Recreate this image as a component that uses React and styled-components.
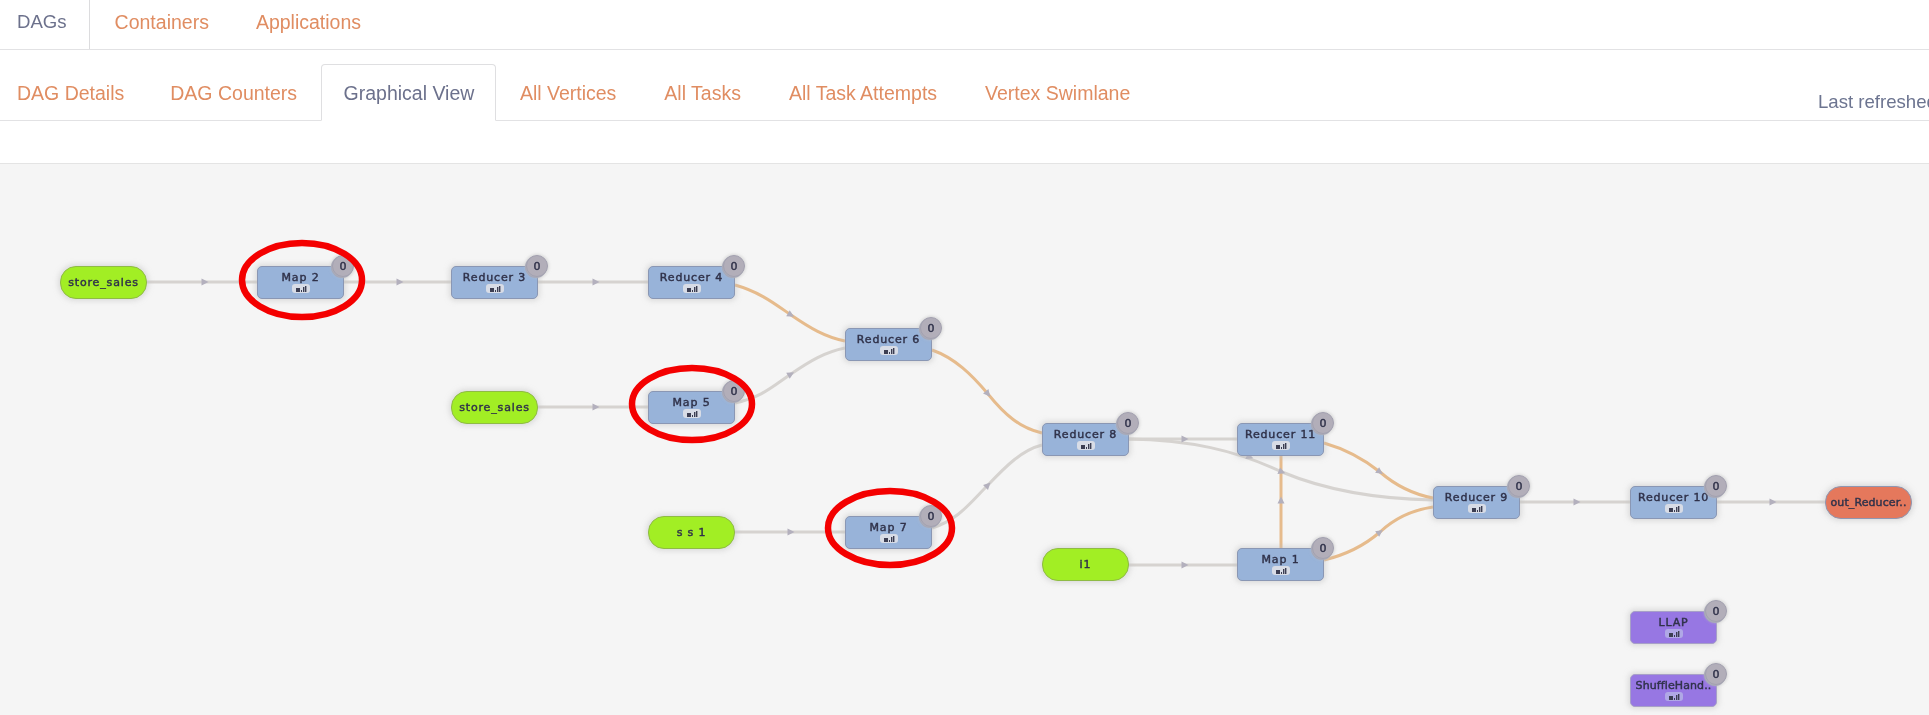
import React from 'react';
import styled, { createGlobalStyle } from 'styled-components';

const Global = createGlobalStyle`
  html, body { margin: 0; padding: 0; height: 100%; background: #fff; overflow: hidden; }
  #root { height: 100%; }
`;

const Page = styled.div`
  width: 1929px;
  height: 715px;
  display: flex;
  flex-direction: column;
  overflow: hidden;
  font-family: "Liberation Sans", Arial, sans-serif;
  filter: blur(0.4px);
`;

const MainNav = styled.nav`
  display: flex;
  height: 49px;
  flex: none;
  border-bottom: 1px solid #e2e2e4;
`;

const MainTab = styled.a`
  padding: 0 23.5px;
  line-height: 44px;
  font-size: 19.5px;
  color: ${p => (p.$active ? '#6c718c' : '#e08d62')};
  ${p => p.$active && `
    padding: 0 22px 0 17px;
    font-size: 18.6px;
    border-right: 1px solid #dcdcde;
    margin-right: 1.5px;
  `}
`;

const SubRow = styled.div`
  display: flex;
  align-items: flex-end;
  height: 56px;
  margin-top: 14px;
  flex: none;
  border-bottom: 1px solid #e2e2e4;
  position: relative;
`;

const SubNav = styled.nav`
  display: flex;
  height: 56px;
`;

const SubTab = styled.a`
  box-sizing: border-box;
  height: 57px;
  padding: 0 23px;
  line-height: 57px;
  font-size: 19.5px;
  border: 1px solid transparent;
  border-radius: 4px 4px 0 0;
  color: #e08d62;
  &:first-child { padding: 0 21px 0 16px; }
  ${p => p.$active && `
    color: #6c718c;
    background: #fff;
    border-color: #dfdfe1;
    border-bottom-color: #fff;
    padding: 0 20.5px 0 21.5px;
  `}
`;

const Refresh = styled.div`
  position: absolute;
  left: 1818px;
  top: 28px;
  font-size: 18.6px;
  line-height: 20px;
  white-space: nowrap;
  color: #6c7490;
`;

const Strip = styled.div`
  height: 42px;
  flex: none;
  border-bottom: 1px solid #e4e4e4;
`;

const Canvas = styled.section`
  position: relative;
  flex: 1;
  background: #f5f5f5;
  overflow: hidden;
`;

const Layer = styled.svg`
  position: absolute;
  left: 0;
  top: 0;
  pointer-events: none;
`;

const palette = {
  vertex: ['#98b3d9', '#8a97b4'],
  source: ['#a2ee24', '#8fbb45'],
  sink: ['#e5785c', '#8f97b2'],
  proc: ['#9777e3', '#a7a0c8'],
};

const Node = styled.div.attrs(p => ({ style: { left: p.$x, top: p.$y - 164 } }))`
  position: absolute;
  box-sizing: border-box;
  width: 87px;
  height: 33px;
  display: flex;
  flex-direction: column;
  align-items: center;
  justify-content: ${p => (p.$plain ? 'center' : 'flex-start')};
  padding-top: ${p => (p.$plain ? 0 : '4px')};
  border: 1.5px solid ${p => palette[p.$kind][1]};
  border-radius: ${p => (p.$plain ? '16px' : '5px')};
  background: ${p => palette[p.$kind][0]};
  box-shadow: 0 0 5px 2px rgba(195, 195, 195, 0.5);
`;

const Label = styled.span`
  font-family: "DejaVu Sans", sans-serif;
  font-size: 11px;
  line-height: 13px;
  letter-spacing: ${p => (p.$tight ? '0.1px' : '0.85px')};
  white-space: nowrap;
  color: #30324a;
  -webkit-text-stroke: 0.45px #30324a;
`;

const Pill = styled.span`
  width: 18px;
  height: 9px;
  border-radius: 3px;
  display: flex;
  align-items: center;
  justify-content: center;
  background: ${p => (p.$dim ? '#b0a8e6' : '#d8dce6')};
`;

const Badge = styled.span`
  position: absolute;
  right: -11px;
  top: -12px;
  width: 22px;
  height: 22px;
  box-sizing: border-box;
  border: 1px solid #a3a1b0;
  border-radius: 50%;
  background: #b2aeb9;
  box-shadow: 0 0 3px 1px rgba(195, 195, 195, 0.6), -1px 1px 0 #9a9db3;
  display: flex;
  align-items: center;
  justify-content: center;
  font-family: "DejaVu Sans", sans-serif;
  font-size: 11px;
  color: #30324a;
  -webkit-text-stroke: 0.45px #30324a;
`;

const Bars = () => (
  <svg width="12" height="6" viewBox="0 0 12 6">
    <rect x="1" y="2" width="4" height="4" fill="#3c3e52" />
    <rect x="6" y="4" width="1" height="2" fill="#3c3e52" />
    <rect x="8" y="1" width="1.4" height="5" fill="#3c3e52" />
    <rect x="10" y="0" width="1.4" height="6" fill="#3c3e52" />
  </svg>
);

const nodes = [
  { k: 'source', x: 60, y: 266, t: 'store_sales' },
  { k: 'vertex', x: 257, y: 266, t: 'Map 2' },
  { k: 'vertex', x: 451, y: 266, t: 'Reducer 3' },
  { k: 'vertex', x: 648, y: 266, t: 'Reducer 4' },
  { k: 'vertex', x: 845, y: 328, t: 'Reducer 6' },
  { k: 'source', x: 451, y: 391, t: 'store_sales' },
  { k: 'vertex', x: 648, y: 391, t: 'Map 5' },
  { k: 'source', x: 648, y: 516, t: 's s 1' },
  { k: 'vertex', x: 845, y: 516, t: 'Map 7' },
  { k: 'vertex', x: 1042, y: 423, t: 'Reducer 8' },
  { k: 'vertex', x: 1237, y: 423, t: 'Reducer 11' },
  { k: 'source', x: 1042, y: 548, t: 'i1' },
  { k: 'vertex', x: 1237, y: 548, t: 'Map 1' },
  { k: 'vertex', x: 1433, y: 486, t: 'Reducer 9' },
  { k: 'vertex', x: 1630, y: 486, t: 'Reducer 10' },
  { k: 'sink', x: 1825, y: 486, t: 'out_Reducer..', tight: true },
  { k: 'proc', x: 1630, y: 611, t: 'LLAP' },
  { k: 'proc', x: 1630, y: 674, t: 'ShuffleHand..', tight: true },
];

const GREY = '#d6d3d0';
const ORANGE = '#e6bb8c';

const edges = [
  [GREY, 'M147 282H257'],
  [GREY, 'M344 282H451'],
  [GREY, 'M538 282H648'],
  [GREY, 'M538 407H648'],
  [GREY, 'M735 532H845'],
  [GREY, 'M1128 565H1237'],
  [GREY, 'M1128 439H1237'],
  [GREY, 'M1520 502H1630'],
  [GREY, 'M1717 502H1825'],
  [GREY, 'M735 403C762 397 772 387 791 374C810 361 825 352 845 348'],
  [GREY, 'M932 528C958 520 970 503 988 485C1006 466 1022 450 1042 445'],
  [GREY, 'M1128 439C1190 440 1235 450 1282 472C1330 492 1380 499 1433 500'],
  [ORANGE, 'M735 285C760 292 775 304 791 315C810 328 825 337 845 341'],
  [ORANGE, 'M932 350C955 358 972 375 988 394C1005 415 1020 428 1042 433'],
  [ORANGE, 'M1324 443C1345 449 1365 460 1380 472C1395 485 1412 494 1433 498'],
  [ORANGE, 'M1324 560C1345 555 1365 545 1380 532C1395 518 1412 510 1433 507'],
  [ORANGE, 'M1281 548V455'],
];

const arrows = [
  [205, 282, 0], [400, 282, 0], [596, 282, 0], [596, 407, 0], [791, 532, 0],
  [1185, 565, 0], [1185, 439, 0], [1577, 502, 0], [1773, 502, 0],
  [791, 374, -30], [988, 485, -45], [791, 315, 30], [988, 394, 50],
  [1250, 457, 22], [1282, 472, 22], [1380, 472, 35], [1380, 532, -35], [1281, 500, -90],
];

const rings = [[302, 280, 60, 37], [692, 404, 60, 36], [890, 528, 62, 37]];

export default function App() {
  return (
    <Page>
      <Global />
      <MainNav>
        <MainTab $active>DAGs</MainTab>
        <MainTab>Containers</MainTab>
        <MainTab>Applications</MainTab>
      </MainNav>
      <SubRow>
        <SubNav>
          <SubTab>DAG Details</SubTab>
          <SubTab>DAG Counters</SubTab>
          <SubTab $active>Graphical View</SubTab>
          <SubTab>All Vertices</SubTab>
          <SubTab>All Tasks</SubTab>
          <SubTab>All Task Attempts</SubTab>
          <SubTab>Vertex Swimlane</SubTab>
        </SubNav>
        <Refresh>Last refreshed</Refresh>
      </SubRow>
      <Strip />
      <Canvas>
        <Layer width="1929" height="551" viewBox="0 164 1929 551">
          {edges.map(([c, d], i) => (
            <path key={i} d={d} fill="none" stroke={c} strokeWidth="3" />
          ))}
          {arrows.map(([x, y, r], i) => (
            <path key={i} d="M-3.5 -3.5L3.5 0L-3.5 3.5Z" fill="#b3b0bd" transform={`translate(${x} ${y}) rotate(${r})`} />
          ))}
        </Layer>
        {nodes.map(n => {
          const plain = n.k === 'source' || n.k === 'sink';
          return (
            <Node key={`${n.t}${n.x}`} $kind={n.k} $x={n.x} $y={n.y} $plain={plain}>
              <Label $tight={n.tight}>{n.t}</Label>
              {!plain && <Pill $dim={n.k === 'proc'}><Bars /></Pill>}
              {!plain && <Badge>0</Badge>}
            </Node>
          );
        })}
        <Layer width="1929" height="551" viewBox="0 164 1929 551">
          {rings.map(([x, y, rx, ry]) => (
            <ellipse key={x} cx={x} cy={y} rx={rx} ry={ry} fill="none" stroke="#f40000" strokeWidth="6.5" />
          ))}
        </Layer>
      </Canvas>
    </Page>
  );
}
